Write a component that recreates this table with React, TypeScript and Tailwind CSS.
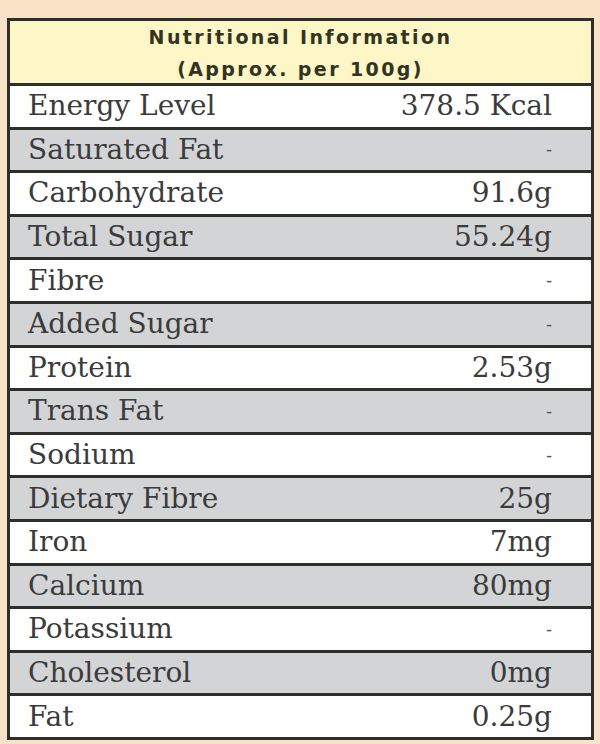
import React from "react";

const rows: [string, string][] = [
  ["Energy Level", "378.5 Kcal"],
  ["Saturated Fat", "-"],
  ["Carbohydrate", "91.6g"],
  ["Total Sugar", "55.24g"],
  ["Fibre", "-"],
  ["Added Sugar", "-"],
  ["Protein", "2.53g"],
  ["Trans Fat", "-"],
  ["Sodium", "-"],
  ["Dietary Fibre", "25g"],
  ["Iron", "7mg"],
  ["Calcium", "80mg"],
  ["Potassium", "-"],
  ["Cholesterol", "0mg"],
  ["Fat", "0.25g"],
];

export default function App() {
  return (
    <div className="w-[600px] h-[744px] overflow-hidden bg-[#f9e3c7] pt-[18px] pl-[7px]">
      <div className="w-[587px] border-[3px] border-[#2e2e2a] bg-white">
        <div className="h-[62px] bg-[#fdf6c6] flex flex-col items-center justify-center pt-[2px] text-[#33331f] font-bold text-[19px] leading-[32px] tracking-[2.4px] [font-family:'DejaVu_Sans',sans-serif]">
          <div>Nutritional Information</div>
          <div>(Approx. per 100g)</div>
        </div>
        {rows.map(([name, value], i) => (
          <div
            key={name}
            className={
              "h-[43.6px] border-t-[3px] border-[#2e2e2a] flex items-center justify-between pl-[18px] pr-[39px] text-[28px] text-[#3b3b3b] [font-family:'DejaVu_Serif',serif] " +
              (i % 2 === 1 ? "bg-[#d3d4d6]" : "bg-white")
            }
          >
            <span>{name}</span>
            <span className={value === "-" ? "text-[18px] text-[#555]" : ""}>{value}</span>
          </div>
        ))}
      </div>
    </div>
  );
}
